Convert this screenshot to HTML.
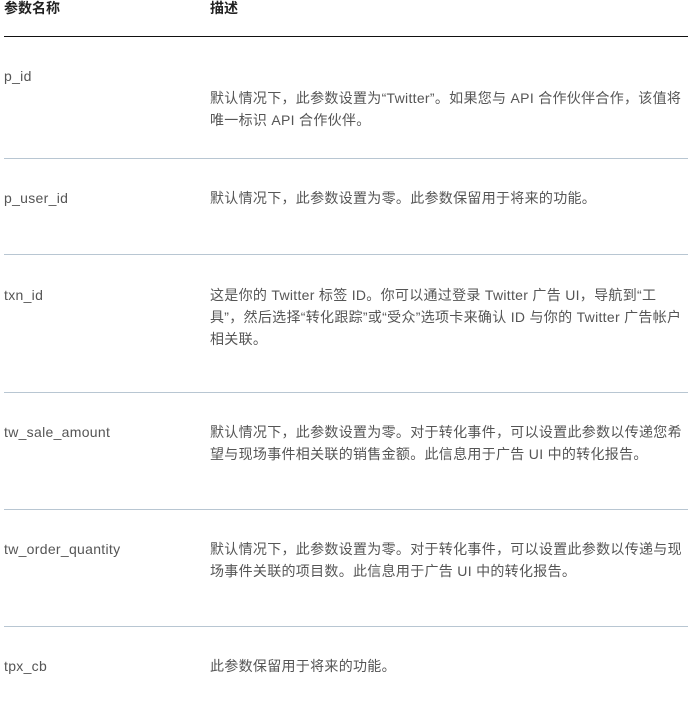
<!DOCTYPE html>
<html><head><meta charset="utf-8"><style>
body{margin:0;background:#fff;width:695px;height:702px;position:relative;overflow:hidden;font-family:"Liberation Sans","Noto Sans CJK SC",sans-serif;font-size:14px;color:#555;}
.t{position:absolute;white-space:nowrap;line-height:22px;letter-spacing:0.3px;}
.h{font-weight:bold;color:#222;letter-spacing:0;}
.l{position:absolute;left:4px;width:684px;height:1px;background:#b8c6d2;}
</style></head><body>
<div class="t h" style="left:4px;top:-3px">参数名称</div>
<div class="t h" style="left:210px;top:-3px">描述</div>
<div class="l" style="top:36px;background:#111"></div>

<div class="t" style="left:4px;top:65px">p_id</div>
<div class="t" style="left:210px;top:87px">默认情况下，此参数设置为“Twitter”。如果您与 API 合作伙伴合作，该值将<br>唯一标识 API 合作伙伴。</div>
<div class="l" style="top:158px"></div>

<div class="t" style="left:4px;top:187px">p_user_id</div>
<div class="t" style="left:210px;top:187px">默认情况下，此参数设置为零。此参数保留用于将来的功能。</div>
<div class="l" style="top:254px"></div>

<div class="t" style="left:4px;top:284px">txn_id</div>
<div class="t" style="left:210px;top:284px">这是你的 Twitter 标签 ID。你可以通过登录 Twitter 广告 UI，导航到“工<br>具”，然后选择“转化跟踪”或“受众”选项卡来确认 ID 与你的 Twitter 广告帐户<br>相关联。</div>
<div class="l" style="top:392px"></div>

<div class="t" style="left:4px;top:421px">tw_sale_amount</div>
<div class="t" style="left:210px;top:421px">默认情况下，此参数设置为零。对于转化事件，可以设置此参数以传递您希<br>望与现场事件相关联的销售金额。此信息用于广告 UI 中的转化报告。</div>
<div class="l" style="top:509px"></div>

<div class="t" style="left:4px;top:538px">tw_order_quantity</div>
<div class="t" style="left:210px;top:538px">默认情况下，此参数设置为零。对于转化事件，可以设置此参数以传递与现<br>场事件关联的项目数。此信息用于广告 UI 中的转化报告。</div>
<div class="l" style="top:626px"></div>

<div class="t" style="left:4px;top:655px">tpx_cb</div>
<div class="t" style="left:210px;top:655px">此参数保留用于将来的功能。</div>
</body></html>
